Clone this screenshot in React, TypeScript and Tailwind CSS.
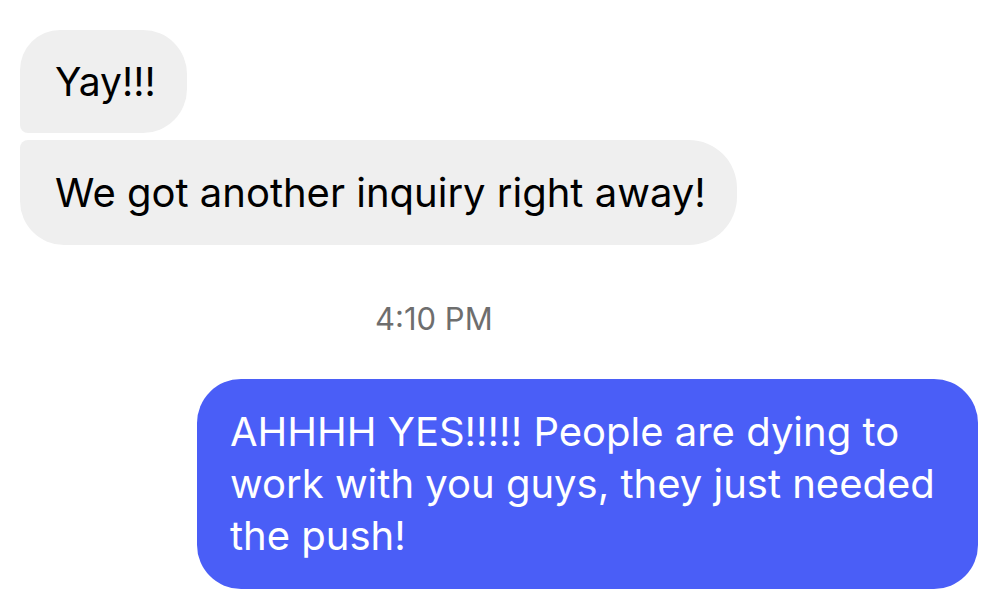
export default function App() {
  return (
    <div
      className="w-[1000px] h-[592px] bg-white overflow-hidden flex flex-col"
      style={{ fontFamily: "Inter, 'Liberation Sans', sans-serif" }}
    >
      <div className="mt-[30px] ml-[20px] flex flex-col items-start gap-[7px]">
        <div className="h-[103px] w-[167px] bg-[#efefef] rounded-tl-[40px] rounded-tr-[44px] rounded-br-[44px] rounded-bl-[8px] flex items-center pl-[35px] text-[39px] text-black leading-none">
          Yay!!!
        </div>
        <div className="h-[105px] w-[717px] bg-[#efefef] rounded-tl-[8px] rounded-tr-[48px] rounded-br-[48px] rounded-bl-[44px] flex items-center pl-[35px] text-[40px] text-black leading-none">
          We got another inquiry right away!
        </div>
      </div>
      <div className="mt-[58px] ml-[375px] text-[31px] text-[#6e6e6e] leading-none">
        4:10 PM
      </div>
      <div className="mt-[45px] self-end mr-[22px] w-[781px] h-[210px] bg-[#4a5ef7] rounded-[44px] pl-[33px] pt-[27px] text-white text-[40px] leading-[52px]">
        AHHHH YES!!!!! People are dying to
        <br />
        work with you guys, they just needed
        <br />
        the push!
      </div>
    </div>
  );
}
